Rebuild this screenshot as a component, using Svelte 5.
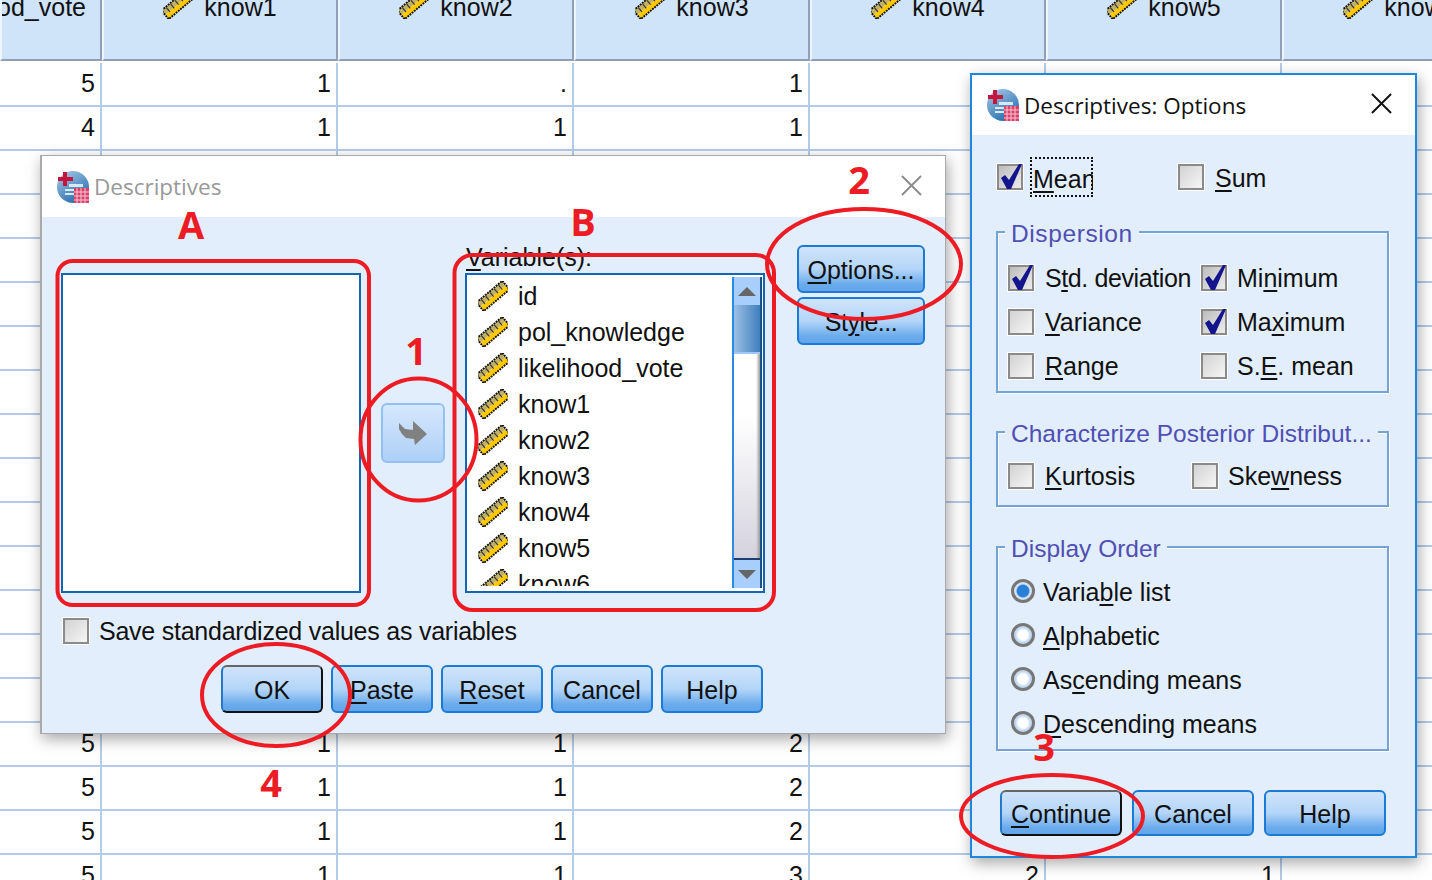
<script>
  const cols = ['likelihood_vote', 'know1', 'know2', 'know3', 'know4', 'know5', 'know6'];
  const rows = [
    ['5', '1', '.', '1', '', ''], ['4', '1', '1', '1', '', ''],
    ['5', '1', '1', '1', '', ''], ['5', '1', '1', '1', '', ''],
    ['4', '1', '1', '1', '', ''], ['5', '1', '1', '2', '', ''],
    ['5', '1', '1', '1', '', ''], ['4', '1', '1', '2', '', ''],
    ['5', '1', '1', '1', '', ''], ['5', '1', '1', '1', '', ''],
    ['5', '1', '1', '2', '', ''], ['4', '1', '1', '1', '', ''],
    ['5', '1', '1', '1', '', ''], ['5', '1', '1', '2', '', ''],
    ['5', '1', '1', '1', '', ''], ['5', '1', '1', '2', '', ''],
    ['5', '1', '1', '2', '', ''], ['5', '1', '1', '2', '', ''],
    ['5', '1', '1', '3', '2', '1']
  ];
  const vars = ['id', 'pol_knowledge', 'likelihood_vote', 'know1', 'know2', 'know3', 'know4', 'know5', 'know6'];
</script>

{#snippet ruler()}
  <svg class="ruler" viewBox="0 0 32 32">
    <g transform="rotate(-40 16 16)">
      <rect x="-2" y="10" width="36" height="6" fill="#bfb06a" />
      <rect x="-2" y="16" width="36" height="6" fill="#ffc800" />
      <rect x="-2" y="10" width="36" height="12" fill="none" stroke="#111" stroke-width="2" stroke-dasharray="2 1" />
      <path d="M4 11v6M10 11v6M16 11v6M22 11v6M28 11v6" stroke="#333" stroke-width="1.2" />
    </g>
  </svg>
{/snippet}

{#snippet appIcon()}
  <svg class="app-icon" viewBox="0 0 32 32">
    <defs>
      <linearGradient id="globe" x1="0" y1="0" x2="0.6" y2="1">
        <stop offset="0" stop-color="#a9cdea" />
        <stop offset="1" stop-color="#2a6fae" />
      </linearGradient>
    </defs>
    <circle cx="16" cy="16" r="16" fill="url(#globe)" />
    <path d="M12 13h14v3H12zM8 18h12v2H8zM8 22h10v2H8z" fill="#d8e8f6" />
    <path d="M6 1h4v5h6v4h-6v5H6v-5H1V6h5z" fill="#c8143c" />
    <rect x="17" y="17" width="15" height="15" fill="#d9406a" />
    <path d="M20 17v15M24 17v15M28 17v15M17 21h15M17 25h15M17 29h15" stroke="#f6c6d4" stroke-width="1" />
  </svg>
{/snippet}

{#snippet checkbox(on)}
  <span class="check" class:on>
    {#if on}
      <svg class="tick" viewBox="0 0 28 28">
        <path d="M5 15l4-3 4 5L23 1h3L15 26h-4z" fill="#14148c" />
      </svg>
    {/if}
  </span>
{/snippet}

<div class="screen">
  <div class="sheet">
    {#each cols as name, i}
      <div class="head" class:first={i === 0}>
        <div class="head-label">
          {#if i > 0}{@render ruler()}{/if}
          <span>{name}</span>
        </div>
      </div>
    {/each}
    {#each rows as row}
      {#each row as val}
        <div class="cell">{val}</div>
      {/each}
      <div class="cell"></div>
    {/each}
  </div>

  <section class="dialog main-dialog">
    <header class="titlebar">
      {@render appIcon()}
      <span class="title muted">Descriptives</span>
      <svg class="close" viewBox="0 0 22 22"><path d="M1 1l20 20M21 1L1 21" stroke="#8c8c8c" stroke-width="2" /></svg>
    </header>
    <div class="body">
      <div class="pick-row">
        <div class="listbox source"></div>
        <button class="arrow" disabled aria-label="Move">
          <svg viewBox="0 0 28 24"><path d="M0 2l6 6 8 1V0l14 13-12 11-1-6-8-1-4-4-3-5z" fill="#808080" /></svg>
        </button>
        <div class="target">
          <div class="field-label"><u>V</u>ariable(s):</div>
          <div class="listbox">
            <ul class="vars">
              {#each vars as v}
                <li>{@render ruler()}<span>{v}</span></li>
              {/each}
            </ul>
            <div class="scrollbar">
              <div class="sb-btn"><i class="tri up"></i></div>
              <div class="sb-thumb"></div>
              <div class="sb-track"></div>
              <div class="sb-btn down"><i class="tri"></i></div>
            </div>
          </div>
        </div>
        <div class="side-btns">
          <button class="btn"><u>O</u>ptions...</button>
          <button class="btn tight">St<u>y</u>le...</button>
        </div>
      </div>
      <div class="save-row">
        {@render checkbox(false)}
        <span class="save-label">Save standardi<u>z</u>ed values as variables</span>
      </div>
      <div class="btn-row">
        <button class="btn default">OK</button>
        <button class="btn"><u>P</u>aste</button>
        <button class="btn"><u>R</u>eset</button>
        <button class="btn">Cancel</button>
        <button class="btn">Help</button>
      </div>
    </div>
  </section>

  <section class="dialog options">
    <header class="titlebar">
      {@render appIcon()}
      <span class="title">Descriptives: Options</span>
      <svg class="close" viewBox="0 0 22 22"><path d="M1 1l20 20M21 1L1 21" stroke="#111" stroke-width="2" /></svg>
    </header>
    <div class="body">
      <div class="top-row">
        <div class="opt mean">{@render checkbox(true)}<span class="focus"><u>M</u>ean</span></div>
        <div class="opt">{@render checkbox(false)}<span class="low"><u>S</u>um</span></div>
      </div>

      <fieldset class="disp">
        <legend class="wide">Dispersion</legend>
        <div class="opts two-a">
          <div class="opt">{@render checkbox(true)}<span class="tight">S<u>t</u>d. deviation</span></div>
          <div class="opt">{@render checkbox(true)}<span>Mi<u>n</u>imum</span></div>
          <div class="opt">{@render checkbox(false)}<span><u>V</u>ariance</span></div>
          <div class="opt">{@render checkbox(true)}<span>Ma<u>x</u>imum</span></div>
          <div class="opt">{@render checkbox(false)}<span><u>R</u>ange</span></div>
          <div class="opt">{@render checkbox(false)}<span>S.<u>E</u>. mean</span></div>
        </div>
      </fieldset>

      <fieldset class="post">
        <legend>Characterize Posterior Distribut...</legend>
        <div class="opts two-b">
          <div class="opt">{@render checkbox(false)}<span><u>K</u>urtosis</span></div>
          <div class="opt">{@render checkbox(false)}<span>Ske<u>w</u>ness</span></div>
        </div>
      </fieldset>

      <fieldset class="order">
        <legend>Display Order</legend>
        <div class="radios">
          <div class="opt"><span class="radio on"></span><span class="low">Varia<u>b</u>le list</span></div>
          <div class="opt"><span class="radio"></span><span class="low"><u>A</u>lphabetic</span></div>
          <div class="opt"><span class="radio"></span><span class="low">As<u>c</u>ending means</span></div>
          <div class="opt"><span class="radio"></span><span class="low"><u>D</u>escending means</span></div>
        </div>
      </fieldset>

      <div class="opt-btns">
        <button class="btn default"><u>C</u>ontinue</button>
        <button class="btn">Cancel</button>
        <button class="btn">Help</button>
      </div>
    </div>
  </section>

  <!-- red hand annotations on top of everything -->
  <svg class="marks" viewBox="0 0 1432 880">
    <g fill="none" stroke="#ed1c24" stroke-width="4">
      <rect x="57.5" y="261" width="311.5" height="344" rx="15" />
      <rect x="454.5" y="255" width="319.5" height="355" rx="18" />
      <ellipse cx="418.5" cy="439.5" rx="58" ry="61" />
      <ellipse cx="864" cy="264" rx="97" ry="55" />
      <ellipse cx="276" cy="695" rx="74" ry="51" />
      <ellipse cx="1052" cy="816" rx="91" ry="41" />
    </g>
    <g class="mark-text">
      <text x="191" y="239">A</text>
      <text x="583" y="236">B</text>
      <text x="416" y="365">1</text>
      <text x="859" y="194">2</text>
      <text x="1044" y="761">3</text>
      <text x="271" y="797">4</text>
    </g>
  </svg>
</div>

<style>
  :global(body) {
    margin: 0;
    background: #fff;
  }
  .screen {
    position: relative;
    width: 1432px;
    height: 880px;
    overflow: hidden;
    font-family: "Liberation Sans", Arial, sans-serif;
    font-size: 25px;
    color: #111;
  }
  u {
    text-decoration-thickness: 2px;
    text-underline-offset: 3px;
  }
  .tight {
    letter-spacing: -0.4px;
  }

  /* data sheet */
  .sheet {
    display: grid;
    grid-template-columns: 102px repeat(6, 236px);
    grid-auto-rows: 44px;
    grid-template-rows: 63px;
    width: 1518px;
  }
  .head {
    background: #cfe3f9;
    border-left: 2px solid #eef5fd;
    border-right: 2px solid #8e9fb7;
    border-bottom: 2px solid #8e9fb7;
    overflow: hidden;
    display: flex;
    justify-content: center;
    box-sizing: border-box;
    height: 61px;
  }
  .head.first {
    justify-content: flex-end;
    padding-right: 14px;
  }
  .head-label {
    display: flex;
    align-items: center;
    flex: none;
    gap: 11px;
    height: 30px;
    margin-top: -8px;
    line-height: 30px;
  }
  .head-label .ruler {
    margin-bottom: 6px;
  }
  .cell {
    box-sizing: border-box;
    border-right: 2px solid #b2cbe8;
    border-bottom: 2px solid #b2cbe8;
    text-align: right;
    padding-right: 5px;
    line-height: 40px;
    color: #111;
  }
  .ruler {
    width: 30px;
    height: 30px;
    flex: none;
  }

  /* windows */
  .dialog {
    position: absolute;
    box-sizing: border-box;
    display: flex;
    flex-direction: column;
    background: #e2eefb;
    box-shadow: 2px 5px 14px rgba(0, 0, 0, 0.35);
  }
  .main-dialog {
    left: 40px;
    top: 155px;
    width: 906px;
    height: 579px;
    border: 1px solid #a9a9a9;
    border-left-width: 2px;
  }
  .options {
    left: 970px;
    top: 73px;
    width: 447px;
    height: 785px;
    border: 2px solid #1e86dc;
  }
  .titlebar {
    display: flex;
    align-items: center;
    background: #fff;
    height: 61px;
    padding: 0 23px 0 15px;
    flex: none;
  }
  .options .titlebar {
    height: 60px;
    padding-right: 23px;
  }
  .app-icon {
    width: 32px;
    height: 32px;
    flex: none;
  }
  .title {
    font-family: "Open Sans", "Noto Sans", sans-serif;
    font-size: 22.5px;
    margin-left: 5px;
    flex: 1;
  }
  .title.muted {
    color: #999;
  }
  .close {
    width: 21px;
    height: 21px;
    margin-top: -3px;
  }
  .options .close {
    margin-top: -4px;
  }

  /* main dialog body */
  .main-dialog .body {
    padding: 28px 0 0 19px;
  }
  .pick-row {
    display: flex;
    align-items: flex-start;
  }
  .listbox {
    box-sizing: border-box;
    width: 300px;
    height: 320px;
    background: #fff;
    border: 2px solid #1565b5;
    display: flex;
    justify-content: space-between;
  }
  .source {
    margin-top: 28px;
  }
  .arrow {
    width: 64px;
    height: 60px;
    margin: 158px 20px 0;
    padding: 0;
    border: 2px solid #92c0f1;
    border-radius: 6px;
    background: linear-gradient(#d6e8fc, #adcff7);
    display: flex;
    align-items: center;
    justify-content: center;
  }
  .arrow svg {
    width: 28px;
    height: 24px;
  }
  .target {
    width: 300px;
  }
  .field-label {
    height: 28px;
    line-height: 24px;
    padding-left: 1px;
  }
  .vars {
    list-style: none;
    margin: 0;
    padding: 3px 0 0 11px;
    height: 311px;
    overflow: hidden;
    box-sizing: border-box;
    flex: 1;
  }
  .vars li {
    display: flex;
    align-items: center;
    height: 36px;
    gap: 10px;
  }
  .scrollbar {
    width: 30px;
    height: 311px;
    margin: 2px 1px 0 0;
    box-sizing: border-box;
    border-left: 2px solid #2b8ae6;
    border-right: 2px solid #1c4f85;
    display: flex;
    flex-direction: column;
    flex: none;
  }
  .sb-btn {
    height: 28px;
    background: #a8cffb;
    display: flex;
    align-items: center;
    justify-content: center;
    flex: none;
  }
  .sb-btn.down {
    border-top: 2px solid #1c3f6f;
  }
  .tri {
    width: 0;
    height: 0;
    border-left: 9px solid transparent;
    border-right: 9px solid transparent;
    border-top: 9px solid #666;
  }
  .tri.up {
    border-top: 0;
    border-bottom: 9px solid #666;
  }
  .sb-thumb {
    height: 47px;
    background: linear-gradient(90deg, #9cc0e6, #3f7fbc);
    border-bottom: 2px solid #9fc8f7;
    flex: none;
  }
  .sb-track {
    flex: 1;
    background:
      linear-gradient(90deg, transparent 85%, #9a9a9a),
      linear-gradient(#fff, #fff 30%, #d4d2de);
  }
  .side-btns {
    display: flex;
    flex-direction: column;
    gap: 4px;
    margin-left: 32px;
    width: 128px;
  }
  .save-row {
    display: flex;
    align-items: center;
    gap: 9px;
    height: 28px;
    margin-top: 24px;
    padding-left: 1px;
  }
  .save-label {
    letter-spacing: -0.24px;
  }
  .btn-row {
    display: flex;
    gap: 8px;
    margin: 20px 0 0 160px;
  }
  .btn-row .btn {
    width: 102px;
    height: 48px;
  }

  .btn {
    box-sizing: border-box;
    height: 48px;
    padding: 2px 0 0;
    font: inherit;
    color: #111;
    border: 2px solid #1a7ad4;
    border-radius: 6px;
    background: linear-gradient(#cfe4fb 0%, #b4d5f8 50%, #6aabec 85%, #62a5ea 100%);
  }
  .btn.tight {
    letter-spacing: -0.5px;
  }
  .btn.default {
    border-color: #666 #111 #111 #2477c9;
  }

  /* options dialog body */
  .options .body {
    padding: 22px 26px 0 24px;
  }
  .top-row {
    display: flex;
    height: 40px;
  }
  .opt {
    display: flex;
    align-items: center;
    gap: 9px;
    white-space: nowrap;
  }
  .top-row .opt {
    width: 181px;
    gap: 6px;
  }
  .top-row .opt + .opt {
    gap: 10px;
  }
  .low {
    padding-top: 2px;
  }
  .focus {
    outline: 2px dotted #111;
    outline-offset: -2px;
    padding: 0 1px 0 3px;
    height: 40px;
    line-height: 44px;
    width: 63px;
    box-sizing: border-box;
    overflow: hidden;
  }
  fieldset {
    margin: 0;
    padding: 0 0 0 9px;
    border: 2px solid #75a3d6;
    box-shadow: 1px 1px 0 #fff, inset 1px 1px 0 #fff;
  }
  legend {
    padding: 4px 6px 0;
    margin-left: -2px;
    line-height: 28px;
    font-size: 24.5px;
    color: #4f4fb4;
    background: #e2eefb;
    white-space: nowrap;
  }
  legend.wide {
    letter-spacing: 0.6px;
  }
  .disp {
    margin-top: 19px;
    padding-top: 8px;
    padding-bottom: 3px;
  }
  .post {
    margin-top: 23px;
    padding-top: 6px;
    padding-bottom: 7px;
  }
  .order {
    margin-top: 24px;
    padding-top: 6px;
    padding-bottom: 4px;
    padding-left: 13px;
  }
  .order legend {
    margin-left: -6px;
  }
  .opts {
    display: grid;
    grid-auto-rows: 44px;
  }
  .opts .opt:nth-child(odd) {
    gap: 10px;
  }
  .two-a {
    grid-template-columns: 193px 1fr;
  }
  .two-b {
    grid-template-columns: 184px 1fr;
  }
  .radios {
    display: grid;
    grid-auto-rows: 44px;
  }
  .radios .opt {
    gap: 8px;
  }
  .opt-btns {
    display: flex;
    gap: 10px;
    margin: 39px 0 0 4px;
  }
  .opt-btns .btn {
    width: 122px;
    height: 46px;
  }

  .check {
    position: relative;
    box-sizing: border-box;
    flex: none;
    width: 28px;
    height: 28px;
    border: 1px solid #fff;
    background: linear-gradient(135deg, #d2d2d2, #f6f6f6) content-box;
    padding: 2px;
    box-shadow: inset 0 0 0 2px #8a8a8a;
  }
  .check.on {
    background: linear-gradient(135deg, #bdbdbd, #ececec) content-box;
  }
  .tick {
    position: absolute;
    left: -1px;
    top: -1px;
    width: 28px;
    height: 28px;
  }
  .radio {
    box-sizing: border-box;
    flex: none;
    width: 24px;
    height: 24px;
    border-radius: 50%;
    border: 3px solid #777;
    background: radial-gradient(circle, #fff 0 38%, #bcd6f2 60%, #e8f1fb 100%);
  }
  .radio.on {
    background: radial-gradient(circle, #2a7fd8 0 45%, #cfe0f2 55%, #e8f1fb 100%);
  }

  /* annotations */
  .marks {
    position: absolute;
    left: 0;
    top: 0;
    width: 1432px;
    height: 880px;
    pointer-events: none;
  }
  .mark-text {
    font-family: "Open Sans", "Noto Sans", sans-serif;
    font-weight: 700;
    font-size: 38px;
    fill: #ed1c24;
    text-anchor: middle;
  }
</style>
